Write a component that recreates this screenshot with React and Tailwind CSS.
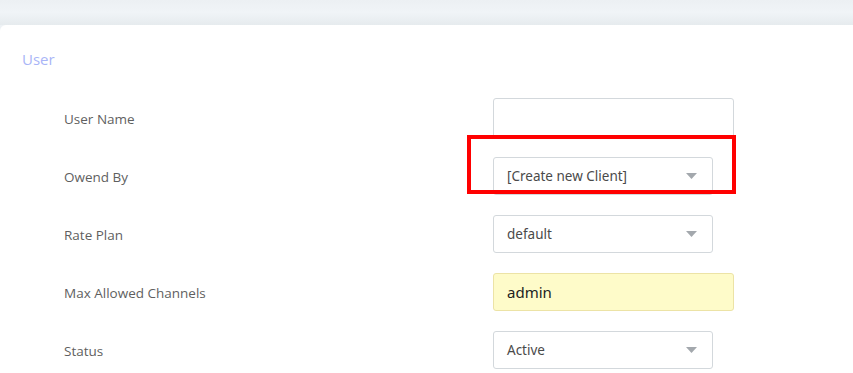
import { useState } from 'react';

function Caret() {
  return (
    <svg width="11" height="6" viewBox="0 0 11 6" className="shrink-0">
      <path d="M0 0 L11 0 L5.5 6 Z" fill="#a3a8ad" />
    </svg>
  );
}

function SelectBox({ value }) {
  return (
    <div className="w-[220px] h-[38px] border border-[#d3d8dc] rounded-[3px] bg-white flex items-center justify-between pl-[13px] pr-[15px] text-[13.5px] text-[#4a4a4a] font-['Noto_Sans',sans-serif]">
      <span>{value}</span>
      <Caret />
    </div>
  );
}

function Row({ label, children }) {
  return (
    <div className="flex items-center h-[38px]">
      <div className="w-[429px] pt-[3px] text-[13.5px] text-[#5f5f5f] font-['Open_Sans',sans-serif]">
        {label}
      </div>
      {children}
    </div>
  );
}

export default function App() {
  const [userName, setUserName] = useState('');

  return (
    <div className="w-[853px] h-[373px] overflow-hidden bg-[#eef2f5]">
      {/* Top band */}
      <div className="h-[25px] bg-gradient-to-b from-[#ecf0f3] via-[#f0f4f7] to-[#e6ebee]" />

      {/* Card */}
      <div className="relative bg-white rounded-tl-[6px] h-[348px]">
        <div className="pl-[22px] pt-[24px] text-[15px] text-[#a9b5f7] font-['Open_Sans',sans-serif] leading-[20px]">
          User
        </div>

        <div className="pl-[64px] pt-[30px] flex flex-col gap-[20px]">
          <Row label="User Name">
            <input
              value={userName}
              onChange={(e) => setUserName(e.target.value)}
              className="w-[241px] h-[40px] border border-[#d3d8dc] rounded-[3px] px-[13px] text-[14px] outline-none font-['Noto_Sans',sans-serif]"
            />
          </Row>
          <Row label="Owend By">
            <SelectBox value="[Create new Client]" />
          </Row>
          <Row label="Rate Plan">
            <SelectBox value="default" />
          </Row>
          <Row label="Max Allowed Channels">
            <div className="w-[241px] h-[38px] border border-[#ece3a6] rounded-[3px] bg-[#fefbc9] flex items-center px-[13px] text-[15px] text-[#222] font-['Noto_Sans',sans-serif]">
              admin
            </div>
          </Row>
          <Row label="Status">
            <SelectBox value="Active" />
          </Row>
        </div>

        {/* Annotation highlight */}
        <div className="absolute left-[467px] top-[110px] w-[269px] h-[59px] border-[4px] border-[#ff0000]" />
      </div>
    </div>
  );
}
